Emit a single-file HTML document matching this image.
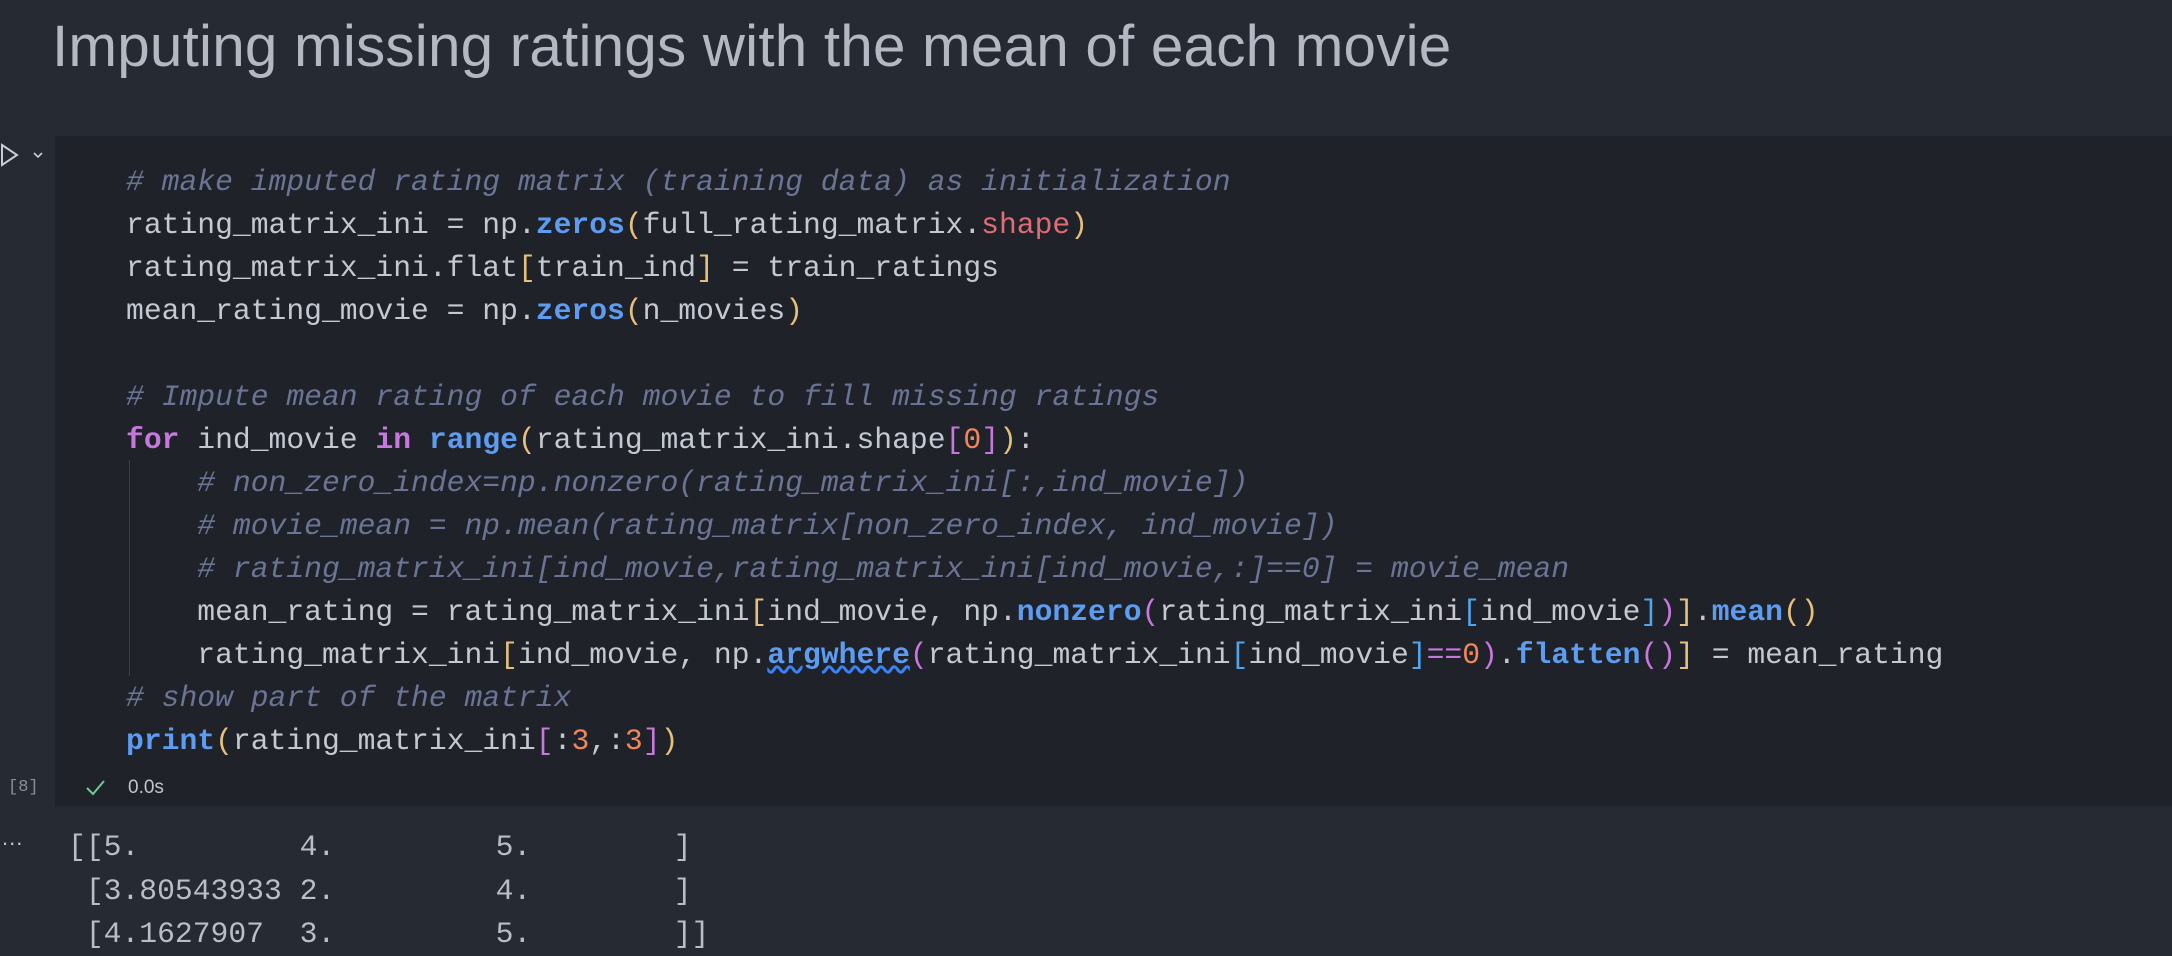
<!DOCTYPE html>
<html><head><meta charset="utf-8"><style>
html,body{margin:0;padding:0;width:2172px;height:956px;overflow:hidden;background:#262a33;}
body{position:relative;font-family:"Liberation Mono",monospace;}
.title{position:absolute;left:52px;top:13px;font-family:"Liberation Sans",sans-serif;font-size:58.4px;color:#b4b8c2;white-space:nowrap;letter-spacing:0.2px}
.cell{position:absolute;left:55px;top:136px;width:2117px;height:670px;background:#1f2229;}
.code{position:absolute;left:126px;top:161px;font-size:29.7px;line-height:43px;color:#c3c8d1;white-space:pre;}
.c{color:#6b7494;font-style:italic}
.f{color:#5d9cf0;font-weight:bold}
.k{color:#c678dd;font-weight:bold}
.s{color:#e06c75}
.y{color:#e5c07b}
.m{color:#c678dd}
.b{color:#4fa6ef}
.n{color:#f0875a}
.op{color:#c678dd}
.guide{position:absolute;left:129px;top:460px;width:1px;height:216px;background:#3a3e48}
.out{position:absolute;left:68px;top:826px;font-size:29.7px;line-height:43.5px;color:#b9bdc6;white-space:pre;}
.small{position:absolute;font-family:"Liberation Sans",sans-serif;font-size:19px;color:#8a8f99}
</style></head><body>
<div class="title">Imputing missing ratings with the mean of each movie</div>
<div class="cell"></div>
<svg style="position:absolute;left:0;top:142px" width="50" height="30"><path d="M2 3 L17 13 L2 23 Z" fill="none" stroke="#c8ccd4" stroke-width="2"/><path d="M34 11 L38 15 L42 11" fill="none" stroke="#c8ccd4" stroke-width="1.6"/></svg>
<div class="guide"></div>
<div class="code"><span class="c"># make imputed rating matrix (training data) as initialization</span>
rating_matrix_ini = np.<span class="f">zeros</span><span class="y">(</span>full_rating_matrix.<span class="s">shape</span><span class="y">)</span>
rating_matrix_ini.flat<span class="y">[</span>train_ind<span class="y">]</span> = train_ratings
mean_rating_movie = np.<span class="f">zeros</span><span class="y">(</span>n_movies<span class="y">)</span>

<span class="c"># Impute mean rating of each movie to fill missing ratings</span>
<span class="k">for</span> ind_movie <span class="k">in</span> <span class="f">range</span><span class="y">(</span>rating_matrix_ini.shape<span class="m">[</span><span class="n">0</span><span class="m">]</span><span class="y">)</span>:
    <span class="c"># non_zero_index=np.nonzero(rating_matrix_ini[:,ind_movie])</span>
    <span class="c"># movie_mean = np.mean(rating_matrix[non_zero_index, ind_movie])</span>
    <span class="c"># rating_matrix_ini[ind_movie,rating_matrix_ini[ind_movie,:]==0] = movie_mean</span>
    mean_rating = rating_matrix_ini<span class="y">[</span>ind_movie, np.<span class="f">nonzero</span><span class="m">(</span>rating_matrix_ini<span class="b">[</span>ind_movie<span class="b">]</span><span class="m">)</span><span class="y">]</span>.<span class="f">mean</span><span class="y">()</span>
    rating_matrix_ini<span class="y">[</span>ind_movie, np.<span class="f" style="text-decoration:underline wavy #3b82f6">argwhere</span><span class="m">(</span>rating_matrix_ini<span class="b">[</span>ind_movie<span class="b">]</span><span class="op">==</span><span class="n">0</span><span class="m">)</span>.<span class="f">flatten</span><span class="m">()</span><span class="y">]</span> = mean_rating
<span class="c"># show part of the matrix</span>
<span class="f">print</span><span class="y">(</span>rating_matrix_ini<span class="m">[</span>:<span class="n">3</span>,:<span class="n">3</span><span class="m">]</span><span class="y">)</span></div>
<div class="small" style="left:8px;top:778px;font-family:'Liberation Mono',monospace;font-size:17px">[8]</div>
<svg style="position:absolute;left:84px;top:777px" width="24" height="22"><path d="M3 11 L9 17 L20 4" fill="none" stroke="#73c991" stroke-width="2"/></svg>
<div class="small" style="left:128px;top:777px;color:#c0c4cc">0.0s</div>
<div class="small" style="left:2px;top:825px;color:#c0c4cc;font-size:22px;letter-spacing:1px">...</div>
<div class="out">[[5.         4.         5.        ]
 [3.80543933 2.         4.        ]
 [4.1627907  3.         5.        ]]</div>
</body></html>
